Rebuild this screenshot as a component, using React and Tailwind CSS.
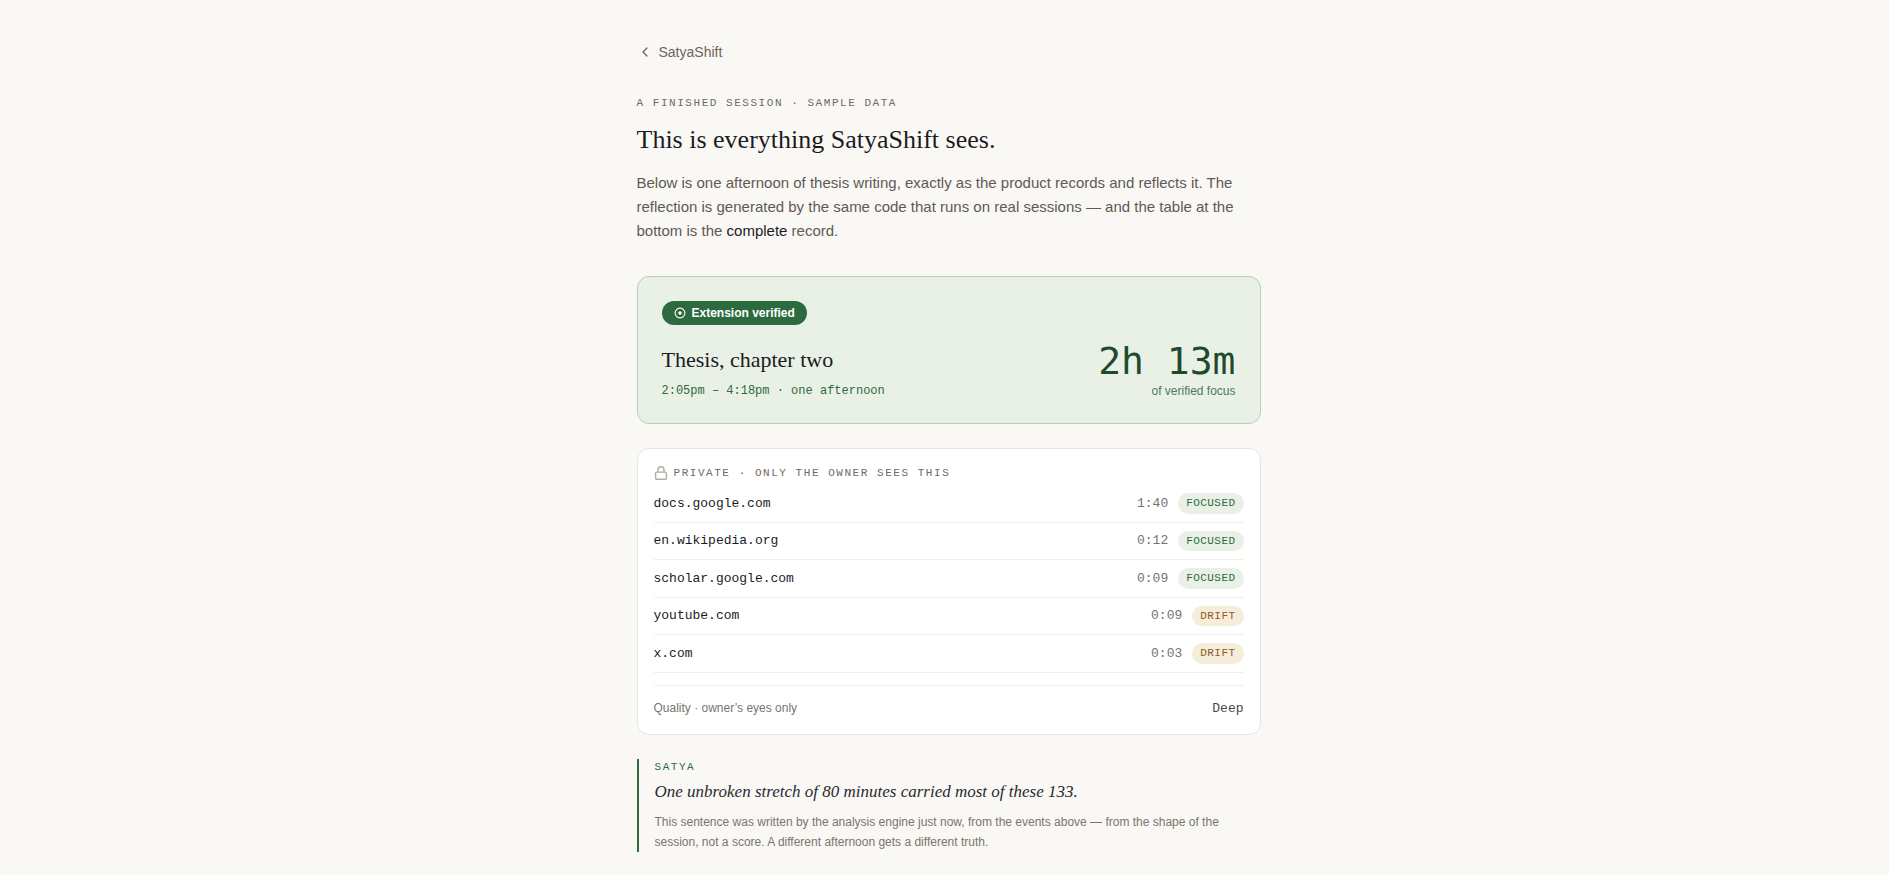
import { ChevronLeft } from "lucide-react";

const SITES = [
  { domain: "docs.google.com", time: "1:40", status: "focused" },
  { domain: "en.wikipedia.org", time: "0:12", status: "focused" },
  { domain: "scholar.google.com", time: "0:09", status: "focused" },
  { domain: "youtube.com", time: "0:09", status: "drift" },
  { domain: "x.com", time: "0:03", status: "drift" },
];

const MONO = "font-['Liberation_Mono',monospace]";
const SERIF = "font-['Liberation_Serif',serif]";

function VerifiedIcon() {
  return (
    <svg width="12" height="12" viewBox="0 0 12 12" fill="none" aria-hidden="true">
      <circle cx="6" cy="6" r="4.9" stroke="currentColor" strokeWidth="1.1" />
      <circle cx="6" cy="6" r="1.8" fill="currentColor" />
    </svg>
  );
}

function LockIcon() {
  return (
    <svg width="14" height="14" viewBox="0 0 14 14" fill="none" stroke="currentColor" strokeWidth="1.4" aria-hidden="true">
      <rect x="1.6" y="6.1" width="10.8" height="7.2" rx="1.2" />
      <path d="M4 6V3.7a3 3 0 0 1 6 0V6" />
    </svg>
  );
}

function StatusPill({ status }) {
  return (
    <span
      className={
        "rounded-full px-2 py-[2px] text-[11px] leading-normal tracking-[0.04em] uppercase " +
        (status === "focused" ? "bg-[#e9f1e6] text-[#2d6a3f]" : "bg-[#f5ecda] text-[#8f5a1c]")
      }
    >
      {status}
    </span>
  );
}

function SessionCard() {
  return (
    <section className="mt-[33px] rounded-xl border border-[#b5d0b6] bg-[#e9f1e6] p-6">
      <div className="flex">
        <span className="flex h-6 items-center gap-[6px] rounded-full bg-[#2d6a3f] px-3 text-xs font-bold text-white">
          <VerifiedIcon />
          Extension verified
        </span>
      </div>
      <div className="mt-4 flex items-end justify-between gap-4">
        <div>
          <h2 className={`${SERIF} text-[22px] leading-[38px] text-[#1c1b1f]`}>Thesis, chapter two</h2>
          <p className={`${MONO} mt-1 text-xs leading-4 text-[#2d6a3f]`}>
            2:05pm – 4:18pm · one afternoon
          </p>
        </div>
        <div className="text-right">
          <p className="font-['DejaVu_Sans_Mono',monospace] text-[38px] leading-10 text-[#1f4a2e]">2h 13m</p>
          <p className="mt-[2px] text-xs leading-4 text-[#4d7a5c]">of verified focus</p>
        </div>
      </div>
    </section>
  );
}

function PrivateCard() {
  return (
    <section className="mt-6 rounded-xl border border-[#e6e5e3] bg-white p-4">
      <h2 className={`${MONO} flex items-center gap-[6px] text-[11px] leading-normal tracking-[0.14em] text-[#6f6a62] uppercase`}>
        <span className="text-[#b3ada3]">
          <LockIcon />
        </span>
        Private · only the owner sees this
      </h2>
      <ul className={`${MONO} mt-1 text-[13px]`}>
        {SITES.map((s) => (
          <li key={s.domain} className="flex items-center justify-between border-b border-[#f0efed] py-2">
            <span className="text-[#1c1b1f]">{s.domain}</span>
            <span className="flex items-center gap-[10px] text-[#78726a]">
              {s.time}
              <StatusPill status={s.status} />
            </span>
          </li>
        ))}
      </ul>
      <div className="mt-3 flex items-center justify-between border-t border-[#f0efed] pt-[13px]">
        <span className="text-xs text-[#7a756d]">Quality · owner’s eyes only</span>
        <span className={`${MONO} text-[13px] leading-normal text-[#4a4640]`}>Deep</span>
      </div>
    </section>
  );
}

export default function App() {
  return (
    <div className="min-h-screen bg-[#faf8f4] pl-2 font-['Liberation_Sans',sans-serif]">
      <main className="mx-auto max-w-[672px] px-6 pt-10 pb-6">
        <nav className="flex">
          <a href="#" className="flex items-center gap-[6px] text-sm leading-6 text-[#6b665e]">
            <ChevronLeft size={16} />
            SatyaShift
          </a>
        </nav>

        <p className={`${MONO} mt-[31px] text-[11px] leading-normal tracking-[0.14em] text-[#6f6a62] uppercase`}>
          A finished session · sample data
        </p>
        <h1 className={`${SERIF} mt-2 text-[26px] leading-10 text-[#1c1b1f]`}>
          This is everything SatyaShift sees.
        </h1>
        <p className="mt-[11px] text-[15px] leading-6 text-[#5f5a53]">
          Below is one afternoon of thesis writing, exactly as the product records and reflects it. The
          reflection is generated by the same code that runs on real sessions — and the table at the
          bottom is the <strong className="font-normal text-[#1c1b1f]">complete</strong> record.
        </p>

        <SessionCard />
        <PrivateCard />

        <section className="mt-6 border-l-2 border-[#2d6a3f] pl-4">
          <h2 className={`${MONO} text-[11px] leading-normal tracking-[0.14em] text-[#2d6a3f] uppercase`}>Satya</h2>
          <p className={`${SERIF} mt-1 text-[17px] leading-6 text-[#2b2930] italic`}>
            One unbroken stretch of 80 minutes carried most of these 133.
          </p>
          <p className="mt-2 text-xs leading-5 text-[#7a756d]">
            This sentence was written by the analysis engine just now, from the events above — from the shape of the
            session, not a score. A different afternoon gets a different truth.
          </p>
        </section>
      </main>
    </div>
  );
}
